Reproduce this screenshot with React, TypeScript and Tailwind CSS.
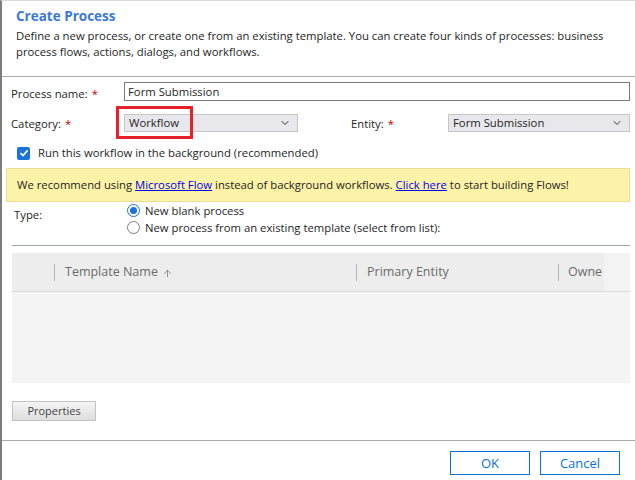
import { ChevronDown, ArrowUp } from "lucide-react";

function Req() {
  return <span className="ml-[4px] text-[#c00000]">*</span>;
}

function Select({ value, className }: { value: string; className: string }) {
  return (
    <div
      className={`flex h-[18px] items-center justify-between border border-[#c6c6c6] bg-[#e8e8ec] pl-[4px] pr-[6px] ${className}`}
    >
      <span>{value}</span>
      <ChevronDown size={12} strokeWidth={2} className="text-[#333]" />
    </div>
  );
}

export default function App() {
  return (
    <div className="flex h-[480px] w-[635px] flex-col overflow-hidden border-l-2 border-t border-l-[#7c7c7c] border-t-[#d6d6d6] bg-white font-['Segoe_UI','Open_Sans',sans-serif] text-[11.3px] leading-[16px] text-[#1e1e1e]">
      <div className="h-[76px] shrink-0 border-b border-[#a8a8a8] px-[14px] pt-[6px]">
        <h1 className="text-[13.5px] font-bold leading-[18px] text-[#3b78d8]">Create Process</h1>
        <p className="mt-[3px]">
          Define a new process, or create one from an existing template. You can create four kinds of processes: business
          process flows, actions, dialogs, and workflows.
        </p>
      </div>

      <div className="flex flex-1 flex-col pl-[9px] pr-[5px]">
        <div className="mt-[5px] flex h-[19px] items-center">
          <div className="w-[113px] pt-[4px]">
            Process name:
            <Req />
          </div>
          <div className="flex h-[19px] flex-1 items-center border border-[#7a7a7a] pl-[3px]">Form Submission</div>
        </div>

        <div className="mt-[13px] flex h-[18px] items-center">
          <div className="w-[113px] pt-[2px]">
            Category:
            <Req />
          </div>
          <div className="relative">
            <Select value="Workflow" className="w-[174px]" />
            <div className="absolute left-[-8px] top-[-8px] h-[33px] w-[77px] border-[3px] border-[#e8202a]" />
          </div>
          <div className="ml-[53px] w-[97px] pt-[2px]">
            Entity:
            <Req />
          </div>
          <Select value="Form Submission" className="flex-1" />
        </div>

        <div className="mt-[13px] flex items-center pl-[6px]">
          <div className="flex h-[13px] w-[13px] items-center justify-center rounded-[2px] bg-[#1a73d6]">
            <svg width="10" height="10" viewBox="0 0 10 10">
              <path d="M1.5 5.2 L4 7.6 L8.6 2.4" fill="none" stroke="white" strokeWidth="1.6" />
            </svg>
          </div>
          <span className="ml-[8px]">Run this workflow in the background (recommended)</span>
        </div>

        <div className="-ml-[5px] mt-[7px] flex h-[34px] items-center border border-[#e8de94] bg-[#fcf2a8] pl-[10px]">
          We recommend using&nbsp;
          <span className="text-[#0000ee] underline">Microsoft Flow</span>
          &nbsp;instead of background workflows.&nbsp;
          <span className="text-[#0000ee] underline">Click here</span>
          &nbsp;to start building Flows!
        </div>

        <div className="flex">
          <div className="w-[116px] pl-[3px] pt-[5px]">Type:</div>
          <div className="flex flex-col">
            <div className="flex h-[17px] items-center">
              <span className="flex h-[13px] w-[13px] items-center justify-center rounded-full border border-[#1a73d6]">
                <span className="h-[7px] w-[7px] rounded-full bg-[#1a73d6]" />
              </span>
              <span className="ml-[5px]">New blank process</span>
            </div>
            <div className="flex h-[17px] items-center">
              <span className="h-[13px] w-[13px] rounded-full border border-[#7c7c86]" />
              <span className="ml-[5px]">New process from an existing template (select from list):</span>
            </div>
          </div>
        </div>

        <div className="ml-[1px] mt-[9px] border-t border-[#a0a4ab]" />

        <div className="ml-[1px] mt-[7px] flex h-[130px] flex-col bg-[#f4f4f4]">
          <div className="flex h-[39px] items-center border-b border-[#dcdcdc] bg-[#ededed] text-[12.5px] text-[#6b6b6b]">
            <div className="w-[42px] shrink-0" />
            <div className="flex w-[302px] shrink-0 items-center">
              <div className="h-[17px] w-px bg-[#b4b4b4]" />
              <span className="ml-[10px] flex items-center">
                Template Name
                <ArrowUp size={11} strokeWidth={1.5} className="ml-[4px] mt-[2px]" />
              </span>
            </div>
            <div className="flex w-[202px] shrink-0 items-center">
              <div className="h-[17px] w-px bg-[#b4b4b4]" />
              <span className="ml-[10px]">Primary Entity</span>
            </div>
            <div className="flex w-[46px] shrink-0 items-center overflow-hidden">
              <div className="h-[17px] w-px shrink-0 bg-[#b4b4b4]" />
              <span className="ml-[9px] whitespace-nowrap">Owne</span>
            </div>
            <div className="h-full flex-1 bg-[#f3f3f3]" />
          </div>
        </div>

        <div className="ml-[1px] mt-[18px] flex h-[20px] w-[84px] items-center justify-center border border-[#c3c3c3] bg-gradient-to-b from-[#f4f4f4] to-[#dedede] text-[11px] text-[#444]">
          Properties
        </div>
      </div>

      <div className="flex h-[40px] shrink-0 items-start justify-end gap-[10px] border-t border-[#a9a9a9] pr-[15px] pt-[10px]">
        <div className="flex h-[24px] w-[80px] items-center justify-center border border-[#0a6fd6] text-[13px] text-[#0a6fd6]">
          OK
        </div>
        <div className="flex h-[24px] w-[80px] items-center justify-center border border-[#0a6fd6] text-[13px] text-[#0a6fd6]">
          Cancel
        </div>
      </div>
    </div>
  );
}
